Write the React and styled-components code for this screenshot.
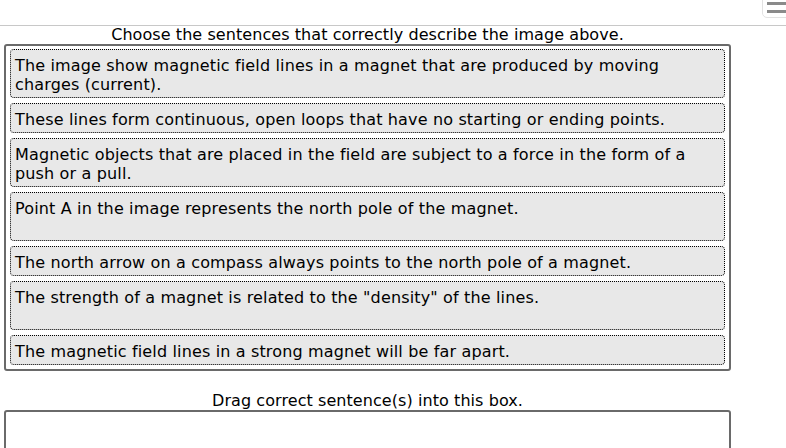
import styled, { createGlobalStyle } from 'styled-components'

const GlobalStyle = createGlobalStyle`
    html, body {
        margin: 0;
        padding: 0;
        background: #fff;
        overflow: hidden;
    }
    body {
        font-family: "DejaVu Sans", Verdana, sans-serif;
        color: #000;
    }
`

const sentences = [
    { text: 'The image show magnetic field lines in a magnet that are produced by moving charges (current).', lines: 2 },
    { text: 'These lines form continuous, open loops that have no starting or ending points.', lines: 1 },
    { text: 'Magnetic objects that are placed in the field are subject to a force in the form of a push or a pull.', lines: 2 },
    { text: 'Point A in the image represents the north pole of the magnet.', lines: 2 },
    { text: 'The north arrow on a compass always points to the north pole of a magnet.', lines: 1 },
    { text: 'The strength of a magnet is related to the "density" of the lines.', lines: 2 },
    { text: 'The magnetic field lines in a strong magnet will be far apart.', lines: 1 },
]

function App() {
    return (
        <>
            <GlobalStyle />
            <TopBar>
                <MenuTab>
                    <span></span>
                    <span></span>
                </MenuTab>
            </TopBar>
            <Page>
                <Caption>Choose the sentences that correctly describe the image above.</Caption>
                <SourceBox>
                    {sentences.map(s => (
                        <Sentence key={s.text} $lines={s.lines}>{s.text}</Sentence>
                    ))}
                </SourceBox>
                <Caption $drop>Drag correct sentence(s) into this box.</Caption>
                <DropBox />
            </Page>
        </>
    )
}

const TopBar = styled.div`
    position: relative;
    height: 25px;
    border-bottom: 1px solid #c8c8c8;
`

const MenuTab = styled.div`
    position: absolute;
    top: -4px;
    left: 762px;
    width: 40px;
    height: 22px;
    background: #fff;
    border: 1px solid #e2e2e2;
    border-radius: 0 0 0 5px;
    display: flex;
    flex-direction: column;
    gap: 5px;
    padding: 5px 0 0 4px;
    box-sizing: border-box;

    span {
        display: block;
        height: 3px;
        background: #8a8a8a;
    }
`

const Page = styled.div`
    width: 727px;
    margin-left: 4px;
    display: flex;
    flex-direction: column;
`

const Caption = styled.p`
    margin: ${p => p.$drop ? '21px 0 0' : '0'};
    height: 18px;
    font-size: 16px;
    line-height: 18px;
    letter-spacing: 0.07px;
    text-align: center;
`

const SourceBox = styled.div`
    border: 2px solid #6a6a6a;
    border-radius: 3px;
    padding: 3px 4px 4px;
    display: flex;
    flex-direction: column;
    gap: 5px;
`

const Sentence = styled.div`
    background: #e8e8e8;
    border: 1px dotted #000;
    border-radius: 4px;
    padding: 6px 4px 3px;
    font-size: 16px;
    line-height: 19px;
    letter-spacing: 0.15px;
    min-height: ${p => p.$lines * 19}px;
    cursor: move;
`

const DropBox = styled.div`
    height: 60px;
    border: 2px solid #6a6a6a;
    border-radius: 3px;
`

export default App
